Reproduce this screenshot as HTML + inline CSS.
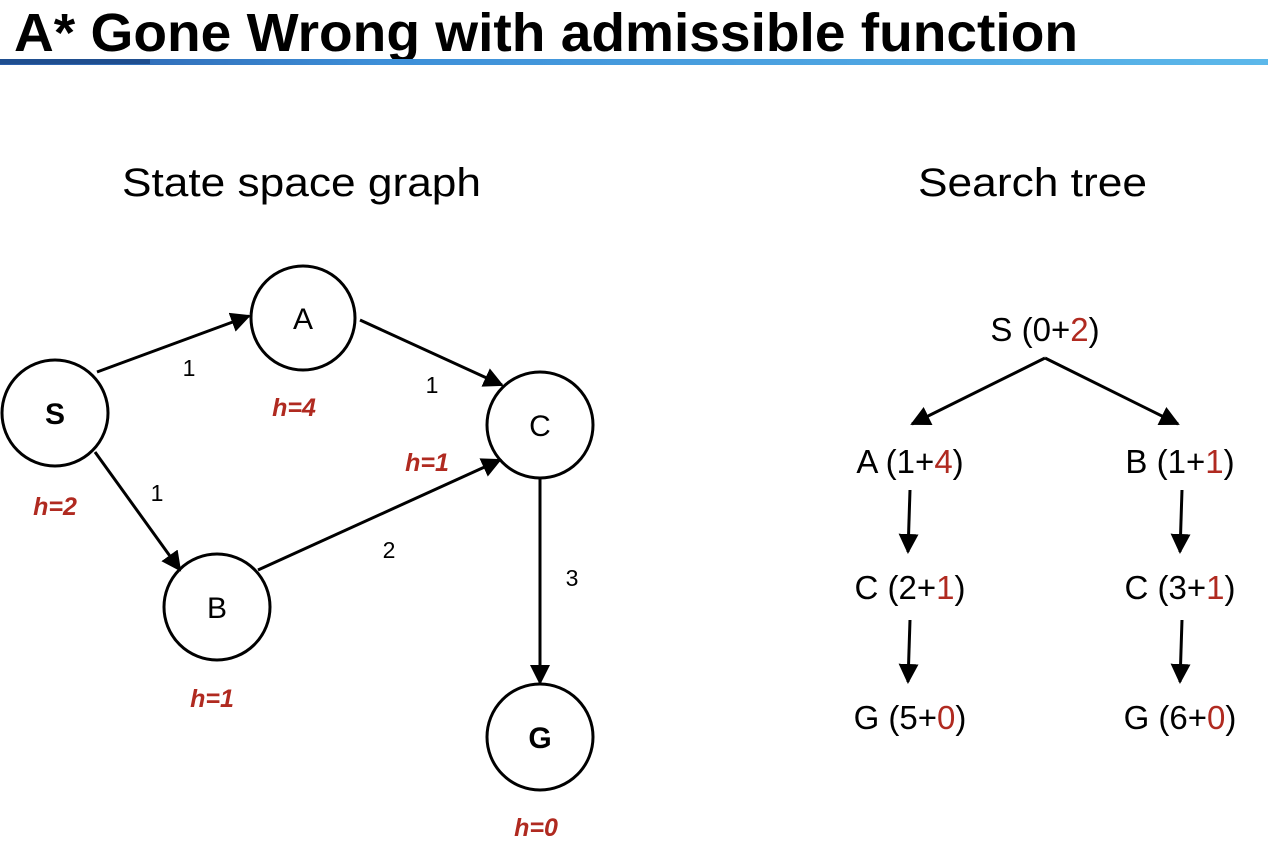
<!DOCTYPE html>
<html><head><style>
body{margin:0;width:1268px;height:854px;background:#fff;overflow:hidden}
</style></head><body>
<svg width="1268" height="854" xmlns="http://www.w3.org/2000/svg" font-family="Liberation Sans, sans-serif">
<defs>
<linearGradient id="g" x1="0" x2="1"><stop offset="0" stop-color="#2a5ca8"/><stop offset="0.3" stop-color="#3d8fd8"/><stop offset="1" stop-color="#5cb8ea"/></linearGradient>
<marker id="a" viewBox="0 0 10 10" refX="9" refY="5" markerWidth="20" markerHeight="20" orient="auto" markerUnits="userSpaceOnUse"><path d="M0,0 L10,5 L0,10z" fill="#000"/></marker>
</defs>
<text x="14" y="51" font-size="54" font-weight="bold" textLength="1064" lengthAdjust="spacingAndGlyphs">A* Gone Wrong with admissible function</text>
<rect x="0" y="59" width="1268" height="6" fill="url(#g)"/>
<rect x="0" y="59" width="150" height="5" fill="#1f4e8f"/>
<text x="122" y="196" font-size="40" textLength="359" lengthAdjust="spacingAndGlyphs">State space graph</text>
<text x="918" y="196" font-size="40" textLength="229" lengthAdjust="spacingAndGlyphs">Search tree</text>
<g fill="none" stroke="#000" stroke-width="3">
<circle cx="55" cy="413" r="53"/><circle cx="303" cy="318" r="52"/><circle cx="540" cy="425" r="53"/><circle cx="217" cy="607" r="53"/><circle cx="540" cy="737" r="53"/>
<line x1="97" y1="372" x2="249" y2="316" marker-end="url(#a)"/>
<line x1="360" y1="320" x2="502" y2="385" marker-end="url(#a)"/>
<line x1="95" y1="452" x2="180" y2="570" marker-end="url(#a)"/>
<line x1="258" y1="570" x2="500" y2="460" marker-end="url(#a)"/>
<line x1="540" y1="478" x2="540" y2="683" marker-end="url(#a)"/>
<line x1="1045" y1="358" x2="912" y2="424" marker-end="url(#a)"/>
<line x1="1045" y1="358" x2="1178" y2="424" marker-end="url(#a)"/>
<line x1="910" y1="490" x2="908" y2="552" marker-end="url(#a)"/>
<line x1="1182" y1="490" x2="1180" y2="552" marker-end="url(#a)"/>
<line x1="910" y1="620" x2="908" y2="682" marker-end="url(#a)"/>
<line x1="1182" y1="620" x2="1180" y2="682" marker-end="url(#a)"/>
</g>
<g font-size="30" text-anchor="middle">
<text x="55" y="424" font-weight="bold">S</text><text x="303" y="329">A</text><text x="540" y="436">C</text><text x="217" y="618">B</text><text x="540" y="748" font-weight="bold">G</text>
</g>
<g font-size="23" text-anchor="middle">
<text x="189" y="376">1</text><text x="432" y="393">1</text><text x="157" y="501">1</text><text x="389" y="558">2</text><text x="572" y="586">3</text>
</g>
<g font-size="25" font-weight="bold" font-style="italic" fill="#b02a20" text-anchor="middle">
<text x="55" y="515">h=2</text><text x="294" y="416">h=4</text><text x="427" y="471">h=1</text><text x="212" y="707">h=1</text><text x="536" y="836">h=0</text>
</g>
<g font-size="33" text-anchor="middle">
<text x="1045" y="341">S (0+<tspan fill="#b02a20">2</tspan>)</text>
<text x="910" y="473">A (1+<tspan fill="#b02a20">4</tspan>)</text>
<text x="1180" y="473">B (1+<tspan fill="#b02a20">1</tspan>)</text>
<text x="910" y="599">C (2+<tspan fill="#b02a20">1</tspan>)</text>
<text x="1180" y="599">C (3+<tspan fill="#b02a20">1</tspan>)</text>
<text x="910" y="729">G (5+<tspan fill="#b02a20">0</tspan>)</text>
<text x="1180" y="729">G (6+<tspan fill="#b02a20">0</tspan>)</text>
</g>
</svg>
</body></html>
